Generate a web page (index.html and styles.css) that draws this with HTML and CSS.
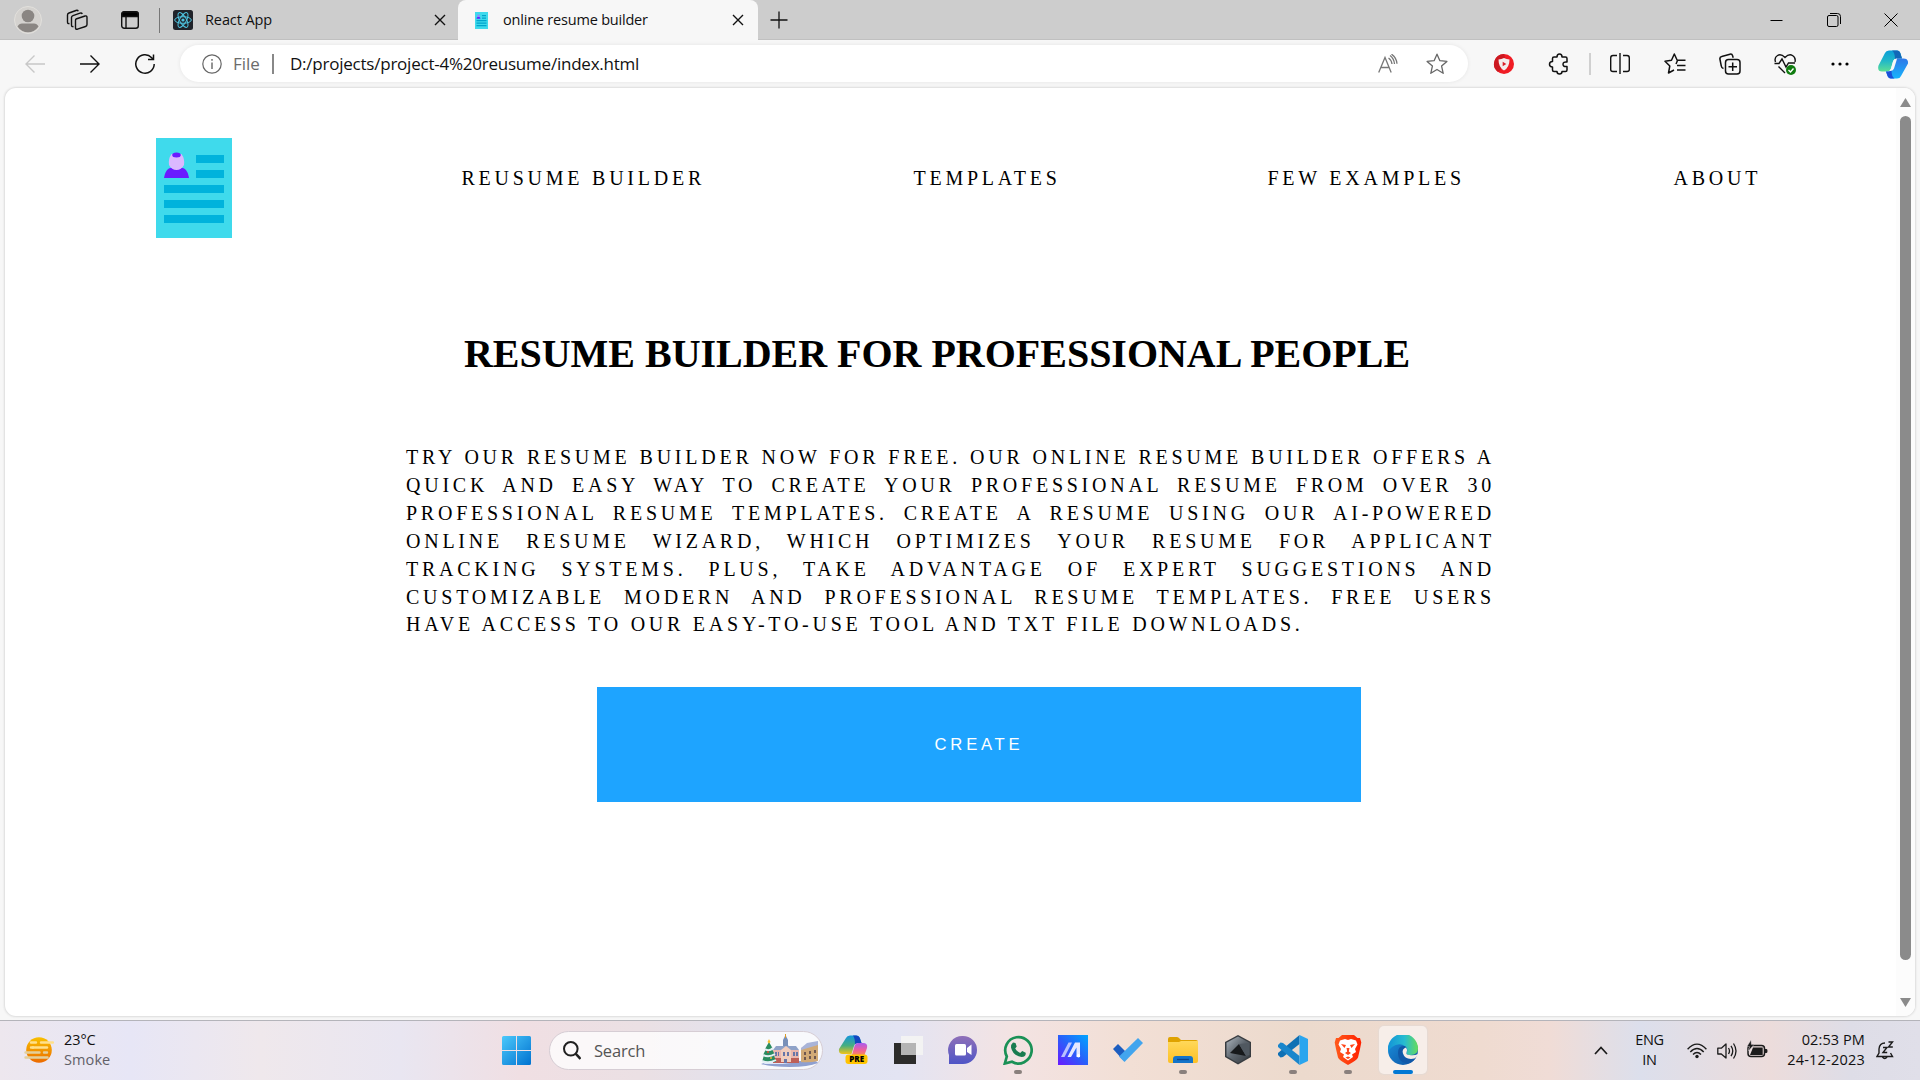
FILE: index.html
```html
<!DOCTYPE html>
<html lang="en">
<head>
<meta charset="utf-8">
<title>online resume builder</title>
<link rel="stylesheet" href="styles.css">
</head>
<body>
<svg width="0" height="0" class="defs" aria-hidden="true">
  <defs>
    <linearGradient id="sun" x1="0" y1="0" x2="0" y2="1"><stop offset="0" stop-color="#f8c000"/><stop offset="1" stop-color="#ec6a00"/></linearGradient>
    <linearGradient id="win" x1="0" y1="0" x2="1" y2="1"><stop offset="0" stop-color="#4cc9fb"/><stop offset="1" stop-color="#0072d0"/></linearGradient>
    <linearGradient id="chat" x1="0" y1="0" x2="0" y2="1"><stop offset="0" stop-color="#8f70b8"/><stop offset="1" stop-color="#4f55c6"/></linearGradient>
    <linearGradient id="ma" x1="0" y1="1" x2="1" y2="0"><stop offset="0" stop-color="#6a19ff"/><stop offset=".5" stop-color="#2860fa"/><stop offset="1" stop-color="#00a5ff"/></linearGradient>
    <linearGradient id="fold" x1="0" y1="0" x2="0" y2="1"><stop offset="0" stop-color="#ffd85a"/><stop offset="1" stop-color="#fdc025"/></linearGradient>
    <linearGradient id="lion" x1="0" y1="0" x2="1" y2="0"><stop offset="0" stop-color="#ff5a1c"/><stop offset="1" stop-color="#ff2000"/></linearGradient>
    <linearGradient id="edgeTop" x1="0" y1="0" x2="1" y2="0"><stop offset="0" stop-color="#1394d8"/><stop offset=".55" stop-color="#27bcd0"/><stop offset="1" stop-color="#66dc5a"/></linearGradient>
    <linearGradient id="edgeLow" x1="0" y1="0" x2="1" y2="1"><stop offset="0" stop-color="#1b94e0"/><stop offset="1" stop-color="#0c4fa0"/></linearGradient>
    <linearGradient id="copA" x1="0" y1="0" x2="0" y2="1"><stop offset="0" stop-color="#0a9ed8"/><stop offset=".5" stop-color="#22b8c8"/><stop offset="1" stop-color="#5ddf95"/></linearGradient>
    <linearGradient id="copB" x1="0" y1="0" x2="0" y2="1"><stop offset="0" stop-color="#2f78e8"/><stop offset="1" stop-color="#18b4fc"/></linearGradient>
    <linearGradient id="preA" x1="0" y1="0" x2="0" y2="1"><stop offset="0" stop-color="#1495dd"/><stop offset=".55" stop-color="#46ae80"/><stop offset="1" stop-color="#f2c419"/></linearGradient>
    <linearGradient id="preB" x1="0" y1="0" x2="0" y2="1"><stop offset="0" stop-color="#a95af0"/><stop offset=".6" stop-color="#f0609a"/><stop offset="1" stop-color="#f98a58"/></linearGradient>
    <linearGradient id="cube" x1="0" y1="0" x2="1" y2="1"><stop offset="0" stop-color="#b0b8c0"/><stop offset=".5" stop-color="#5c646c"/><stop offset="1" stop-color="#34393e"/></linearGradient>
    <symbol id="resume" viewBox="0 0 76 100" preserveAspectRatio="none">
      <path fill="#3fdaec" d="M0 0h76v100H0z"/>
      <path fill="#00b3dc" d="M40 17h28v8H40zM40 32h28v8H40zM8 47h60v8H8zM8 62h60v8H8zM8 77h60v8H8z"/>
      <path fill="#6a1bff" d="M8 40c1-6 3-9 6-10h13c3 1 5 4 6 10z"/>
      <path fill="#dbb8ff" d="M15.500 16q-3.500 5-2.500 11c1.500 3 4.500 5 7.500 5s6-2 7.500-5q1-6-2.500-11z"/>
      <ellipse cx="20.500" cy="17" rx="4.300" ry="2.500" fill="#6a1bff"/>
    </symbol>
    <symbol id="x" viewBox="0 0 12 12"><path d="M1 1l10 10M11 1L1 11" fill="none" stroke="#111" stroke-width="1.400"/></symbol>
  </defs>
</svg>

<header class="tabbar">
  <div class="tab-tools">
    <svg class="avatar" viewBox="0 0 28 28"><circle cx="14" cy="14" r="13.500" fill="#d4d2cf" stroke="#e2e0dc"/><circle cx="14" cy="10" r="6.300" fill="#8a8683"/><path d="M3.500 20.500Q5 17.500 8 17.500h12q3 0 4.500 3A12.500 12.500 0 0 1 3.500 20.500z" fill="#8a8683"/></svg>
    <svg class="workspaces" viewBox="0 0 22 22" fill="none" stroke="#111" stroke-width="1.400"><path d="M10 10l9-3q2-.5 2 1.500v7q0 1.500-1.500 2l-8 2.700q-2 .5-2-1.500v-7q0-1.300.5-1.700z"/><path d="M7.500 17.500Q5.500 18 5.500 16V8.500Q5.500 7.300 7 6.700l7-2.500q1.600-.6 2.300.8"/><path d="M3.500 14.500Q1.500 15 1.500 13V6Q1.500 4.500 3 4l7-2.500q1.600-.6 2.300.8"/></svg>
    <svg class="tabicon" viewBox="0 0 18 18" fill="none" stroke="#111" stroke-width="1.400"><rect x=".7" y=".7" width="16.600" height="16.600" rx="2.500"/><path d="M1 3Q1 1 3 1h12q2 0 2 2v2.500H1z" fill="#000"/><path d="M5 5v12"/></svg>
  </div>
  <div class="tab">
    <svg class="react" viewBox="0 0 20 20"><rect width="20" height="20" rx="2.500" fill="#20232a"/><g fill="none" stroke="#4fc4e0" stroke-width="1"><ellipse cx="10" cy="10" rx="8.300" ry="3.300"/><ellipse cx="10" cy="10" rx="8.300" ry="3.300" transform="rotate(60 10 10)"/><ellipse cx="10" cy="10" rx="8.300" ry="3.300" transform="rotate(120 10 10)"/></g><circle cx="10" cy="10" r="1.600" fill="#4fc4e0"/></svg>
    <span class="tab-name react-name">React App</span>
    <svg class="close"><use href="#x"/></svg>
  </div>
  <div class="tab active">
    <svg class="favicon" viewBox="0 0 13 17"><path fill="#3fdaec" d="M0 0h13v17H0z"/><path fill="#00a4cc" d="M7 3h4v1.200H7zM7 5.500h4v1.200H7zM1.500 8h10v1.200h-10zM1.500 10.500h10v1.200h-10zM1.500 13h10v1.200h-10z"/><path fill="#6a1bff" d="M1.500 6.800q0-2 2-2t2 2z"/><circle cx="3.500" cy="3.800" r="1.200" fill="#a080ff"/></svg>
    <span class="tab-name resume-name">online resume builder</span>
    <svg class="close"><use href="#x"/></svg>
  </div>
  <svg class="plus" viewBox="0 0 18 18"><path d="M9 .5v17M.5 9h17" stroke="#111" stroke-width="1.300"/></svg>
  <div class="window-buttons">
    <svg viewBox="0 0 14 14"><path d="M0.500 7.500h12" stroke="#000"/></svg>
    <svg viewBox="0 0 14 14" fill="none" stroke="#000"><rect x=".5" y="2.500" width="10.500" height="11" rx="1.500"/><path d="M3 .5h7.500q3 0 3 3V11"/></svg>
    <svg viewBox="0 0 14 14"><path d="M.5.5l13 13M13.500.5l-13 13" stroke="#000"/></svg>
  </div>
</header>

<nav class="toolbar">
  <div class="history">
    <svg viewBox="0 0 20 20" fill="none" stroke="#c8c8c8" stroke-width="1.400"><path d="M20 10H1M9.500 1.500L1 10l8.500 8.500"/></svg>
    <svg viewBox="0 0 20 20" fill="none" stroke="#111" stroke-width="1.400"><path d="M0 10h19M10.500 1.500L19 10l-8.500 8.500"/></svg>
    <svg viewBox="0 0 20 20" fill="none" stroke="#111" stroke-width="1.500"><path d="M19.200 10a9.200 9.200 0 1 1-2.500-6.300l1.800 1.800M18.500.5v5h-5.500"/></svg>
  </div>
  <div class="address">
    <svg class="info" viewBox="0 0 20 20"><circle cx="10" cy="10" r="9.200" fill="none" stroke="#666" stroke-width="1.200"/><path d="M10 8.500V15M10 5v1.700" stroke="#666" stroke-width="1.400"/></svg>
    <span class="scheme">File</span>
    <span class="url">D:/projects/project-4%20reusume/index.html</span>
    <svg class="aloud" viewBox="0 0 20 20" fill="none" stroke="#777" stroke-width="1.300"><path d="M.7 18.500L7 3.500l6.200 15M3 13.500h8M10.500 4q3 2 3.500 6M12 1.500q4 3 4.500 8.500M13.500.2q4.800 3 5.500 9.500"/></svg>
    <svg class="fav" viewBox="0 0 22 22" fill="none" stroke="#666" stroke-width="1.300" stroke-linejoin="round"><path d="M11 1.200l2.900 6.500 7 .7-5.300 4.700 1.600 7.200-6.200-3.800-6.200 3.800 1.600-7.200L1.100 8.400l7-.7z"/></svg>
  </div>
  <div class="extensions">
    <svg viewBox="0 0 22 22"><circle cx="11" cy="11" r="10" fill="#f01c24"/><path d="M11 1a10 10 0 0 0-6 18L14 11z" fill="#cc1820"/><path d="M11 5q2.500 1.300 5.500 1.500 0 8-5.500 11-5.500-3-5.500-11Q8.500 6.300 11 5z" fill="#f4eeee"/><path d="M9.700 8.700l3.600 2.300-3.600 2.300z" fill="#d8202a"/></svg>
    <svg viewBox="0 0 22 22" fill="none" stroke="#111" stroke-width="1.500" stroke-linejoin="round"><path d="M6 4h3Q9 1 11.500 1T14 4h3.500q1.500 0 1.500 1.500V9q-4-.5-4 2.300t4 2.200v3.500q0 1.500-1.500 1.500H14q0 2.500-2.500 2.500T9 18.500H6q-1.500 0-1.500-1.500v-3Q1.500 14 1.500 11.300t3-2.800v-3Q4.500 4 6 4z"/></svg>
    <i class="rule"></i>
    <svg viewBox="0 0 22 22" fill="none" stroke="#111" stroke-width="1.400"><path d="M8 2.500H4Q1.700 2.500 1.700 5v11.500q0 2 2.300 2h4M14 2.500h4q2.300 0 2.300 2.500v11.500q0 2-2.300 2h-4M11 0v21"/></svg>
    <svg viewBox="0 0 22 22" fill="none" stroke="#111" stroke-width="1.500" stroke-linejoin="round"><path d="M10 17l-5.500 3 1.300-7L1 8.200l6.500-1L10.300 1l2.900 6.200h8.300M13 12.500h8.500M13 17h8.500M13.500 7.500L12 11"/></svg>
    <svg viewBox="0 0 22 22" fill="none" stroke="#111" stroke-width="1.500"><path d="M4.500 15.500Q2.500 15 2.300 13L.9 6Q.6 4 2.700 3.500L11 1.200q2-.5 2.600 1.500l.6 2"/><rect x="6.500" y="6.500" width="14.500" height="14.500" rx="3"/><path d="M13.700 9.500v8.500M9.500 13.700h8.500"/></svg>
    <svg viewBox="0 0 22 22" fill="none" stroke="#111" stroke-width="1.400"><path d="M1.500 9Q0 4.500 3.500 2.500t7.500 2q4-4 7.500-2T21 9M.5 10.500h4.500L8 6l4 8 2.500-4H21M4.500 13.500L11 20"/><circle cx="17" cy="17" r="5" fill="#107c10" stroke="none"/><path d="M14.500 17l2 2 3-3.500" stroke="#fff"/></svg>
    <svg viewBox="0 0 22 22"><circle cx="4" cy="11" r="1.600"/><circle cx="11" cy="11" r="1.600"/><circle cx="18" cy="11" r="1.600"/></svg>
  </div>
  <svg class="copilot" viewBox="0 0 30 28"><path d="M7 2.500Q8 0 11 0h8q2.500 0 3.500 3l1.500 5h-5q-3 0-4 3l-2 7q-1 3-4 3H4q-5 0-3.500-6z" fill="url(#copA)"/><path d="M14 0h5q2.500 0 3.500 3L24 8h-5l-2 1Q17 2 14 0z" fill="#1268b8"/><path d="M23 25.500q-1 2.500-4 2.500h-6q-3 0-4-4l-1-3h2.500q2.500 0 3.500-3l2-7q1-3 4-3h5.500q5 0 4.500 5z" fill="url(#copB)"/><path d="M8 21h3l2.500-1q0 6 3 8H13q-3 0-4-4z" fill="#1c50d8"/><path d="M19 8q-3 0-4 3l-2 7-1.500 2.500Q15 20.500 16 18l2.500-8z" fill="#f7f7f7"/></svg>
</nav>

<div class="viewport">
  <div class="page">
    <div class="menu">
      <svg class="logo"><use href="#resume"/></svg>
      <a class="m1">REUSUME BUILDER</a>
      <a class="m2">TEMPLATES</a>
      <a class="m3">FEW EXAMPLES</a>
      <a class="m4">ABOUT</a>
    </div>
    <h1>RESUME BUILDER FOR PROFESSIONAL PEOPLE</h1>
    <p>TRY OUR RESUME BUILDER NOW FOR FREE. OUR ONLINE RESUME BUILDER OFFERS A QUICK AND EASY WAY TO CREATE YOUR PROFESSIONAL RESUME FROM OVER 30 PROFESSIONAL RESUME TEMPLATES. CREATE A RESUME USING OUR AI-POWERED ONLINE RESUME WIZARD, WHICH OPTIMIZES YOUR RESUME FOR APPLICANT TRACKING SYSTEMS. PLUS, TAKE ADVANTAGE OF EXPERT SUGGESTIONS AND CUSTOMIZABLE MODERN AND PROFESSIONAL RESUME TEMPLATES. FREE USERS HAVE ACCESS TO OUR EASY-TO-USE TOOL AND TXT FILE DOWNLOADS.</p>
    <button class="create">CREATE</button>
  </div>
  <div class="scrollbar">
    <svg viewBox="0 0 11 9"><path d="M5.500 0L11 9H0z" fill="#8b8b8b"/></svg>
    <i class="thumb"></i>
    <svg viewBox="0 0 11 9"><path d="M5.500 9L11 0H0z" fill="#8b8b8b"/></svg>
  </div>
</div>

<footer class="taskbar">
  <div class="weather">
    <svg viewBox="0 0 30 28"><circle cx="15" cy="14" r="12.800" fill="url(#sun)"/><g stroke="#e3cf9c" stroke-width="2.400" stroke-linecap="round"><path d="M7 6.500h5M17 6.500h5M7 11.500h2M17 6.500h12" stroke="#ffe08a"/><path d="M9 11.500h14" stroke="#ffe08a"/><path d="M1.500 16.500h14M20 16.500h3M1.500 21.500h22"/></g></svg>
    <div><span class="degrees">23°C</span><span class="sky">Smoke</span></div>
  </div>
  <svg class="start" viewBox="0 0 29 29" fill="url(#win)"><path d="M1.500 0H14v14H0V1.500Q0 0 1.500 0zM15 0h12.500Q29 0 29 1.500V14H15zM0 15h14v14H1.500Q0 29 0 27.500zM15 15h14v12.500q0 1.500-1.500 1.500H15z"/></svg>
  <div class="search">
    <svg class="lens" viewBox="0 0 18 19" fill="none" stroke="#202020" stroke-width="2"><circle cx="7.800" cy="7.800" r="6.800"/><path d="M12.500 12.500l5 5.500" stroke-width="2.600"/></svg>
    <span>Search</span>
    <svg class="village" viewBox="0 0 58 33">
      <path d="M0 30q10-5 22-3h22q10-2 13 2-10 4-28 4T0 30z" fill="#8fa0d0"/>
      <path d="M2 29q8-3 16-1 6 2 18 2H4z" fill="#dfe8fa"/>
      <path d="M40 14l17-5v18q-9 2-17 1z" fill="#d2aa76"/><path d="M40 14l6-5 11-2v4l-17 5z" fill="#a9b4d8"/>
      <path d="M43 18h2v3h-2zM48 17h2v3h-2zM53 16h2v3h-2zM43 23h2v3h-2zM48 22h2v3h-2zM53 22h2v3h-2z" fill="#6f5850"/>
      <path d="M12 16h26v13H12z" fill="#eab7ae"/><path d="M12 24h26v5H12z" fill="#bd5f58"/>
      <path d="M12 16l3-4h7l3-2 3 2h7l3 4z" fill="#8ea2c8"/><path d="M20 16l5-4 5 4v12h-10z" fill="#f0cdbc"/>
      <path d="M22 12V6l2.500-5L27 6v6z" fill="#7890b8"/><path d="M24.500 0v4" stroke="#d99a28"/>
      <path d="M14 18h2v4h-2zM17 18h1v4h-1zM22 18h2v4h-2zM26 18h2v4h-2zM32 18h2v4h-2zM35 18h2v4h-2zM23 25h3v4h-3z" fill="#6776a8"/>
      <path d="M8 8l4 7h-1l3 6h-1l2 7H1l2-7H2l3-6H4z" fill="#2b8c60"/><path d="M4 15q4 3 8-1M2 21q6 3 12-1M1 27q7 3 14-1" stroke="#e4f0f4" stroke-width="2" fill="none"/>
      <path d="M8 5l1.500 3-1.500 1.500L6.500 8z" fill="#f8c030"/><circle cx="7" cy="18" r="1" fill="#e04c38"/><circle cx="10" cy="24" r="1" fill="#f2b530"/>
    </svg>
  </div>
  <div class="apps">
    <div class="app"><svg viewBox="0 0 30 30"><path d="M8 3q1-2.500 4-2.500h6q3 0 4 3L23.500 8H20q-3 0-4 3l-2.500 8H5Q0 19 1 14z" fill="url(#preA)"/><path d="M15 .5h3q3 0 4 3L23.500 8H20l-3 1Q17 3 15 .5z" fill="#1246c0"/><path d="M14 20l2.500-9q1-3 4-3H25q5 0 4 5l-2.500 7z" fill="url(#preB)"/><rect x="7.500" y="19.500" width="22" height="9.500" rx="3" fill="#ffc400"/><text x="18.600" y="27.200" class="pre">PRE</text></svg></div>
    <div class="app"><svg viewBox="0 0 30 30"><path d="M1 8h22v21H1z" fill="#2c2c2b"/><path d="M8 1h22v19H8z" fill="#f3f3f3"/><path d="M8 8h15v12H8z" fill="#b4b4b4"/></svg></div>
    <div class="app"><svg viewBox="0 0 30 30"><path d="M15 1a14 14 0 1 1 0 28H1V20A14 14 0 0 1 15 1z" fill="url(#chat)"/><rect x="7" y="9" width="11" height="11.500" rx="1.500" fill="#fff"/><path d="M19 13l4.500-3.500v10.500L19 17z" fill="#fff"/></svg></div>
    <div class="app open"><svg viewBox="0 0 30 30"><path d="M1.800 28.500l2-7A13.200 13.200 0 1 1 9 26.800z" fill="none" stroke="#1a9156" stroke-width="2.700"/><path d="M10 7.500l2.500.5 1.200 3.500-1.500 2q1.500 3 5 4.500l2-2 3.500 1.800q.5 4-4 4.200Q10 21 8 12.500 8 9 10 7.500z" fill="#1a7c50"/></svg></div>
    <div class="app"><svg viewBox="0 0 30 30"><path d="M0 0h30v30H0z" fill="url(#ma)"/><path d="M3 22L10.500 7.500H14L6.500 22z" fill="#b9c0ff"/><path d="M9.500 22L17 7.500h5V22h-3.500v-9.500L13 22z" fill="#e5e8ff"/><circle cx="20.500" cy="20.700" r="1.700" fill="#fff"/></svg></div>
    <div class="app"><svg viewBox="0 0 30 30"><path d="M0 14l5-5 10.500 10.500-5 6z" fill="#1c5dc0"/><path d="M25 3l5 5-18.500 19-5.500-5.500z" fill="#42a5ee"/></svg></div>
    <div class="app open"><svg viewBox="0 0 30 30"><path d="M0 7V4Q0 2 2 2h7q1.500 0 2.500 1.500L13 5h15q2 0 2 2z" fill="#dfa200"/><path d="M0 7h11l2-1h17v20q0 2-2 2H2q-2 0-2-2z" fill="url(#fold)"/><path d="M5 28v-4q0-3 3-3h14q3 0 3 3v4z" fill="#1474c9"/><path d="M9 24.500h12" stroke="#0b468c" stroke-width="1.300"/></svg></div>
    <div class="app"><svg viewBox="0 0 30 30"><path d="M15 0l13 7v15l-13 7.500L2 22V7z" fill="#383c40"/><path d="M15 1.500l11.500 6.300v13.500L15 28 3.500 21.300V7.800z" fill="url(#cube)"/><path d="M16 9l7 12-16-3z" fill="#17191b"/><path d="M16 9l7 12 3.500-1V8z" fill="#505860"/></svg></div>
    <div class="app open"><svg viewBox="0 0 30 30"><path d="M21.500 0v9L5 22l-2.500.5L0 20v-2z" fill="#0f70b4"/><path d="M21.500 30v-9L5 8l-2.500-.5L0 10v2z" fill="#1a86cc"/><path d="M21.500 0L30 4v22l-8.500 4z" fill="#2aa5ee"/></svg></div>
    <div class="app open"><svg viewBox="0 0 30 30"><path d="M9 0h12l3.500 3H27l1.300 4.500L27 14l-2 8.500q-1 2.500-10 7.500Q6 25 5 22.500L3 14 1.700 7.500 3 3h2.500z" fill="url(#lion)"/><path d="M15 5l3-1 5 1.500 1.500 4-2.500 4.500 1 3-4 2.500 1 2.500-5 3.500-5-3.500 1-2.500-4-2.500 1-3L5.500 9.500l1.500-4L12 4z" fill="#fff"/><path d="M8 9l5 1-1.500 3zM22 9l-5 1 1.500 3zM13.500 13h3l-.7 3.500 2.200 1.500-3 2-3-2 2.200-1.500zM9 15l2 3M21 15l-2 3M12.500 22.500l2.500-1 2.500 1-2.500 1.500z" fill="#ff4518"/></svg></div>
    <div class="app current"><svg viewBox="0 0 30 30"><circle cx="15" cy="15" r="15" fill="url(#edgeLow)"/><path d="M0 14A15 15 0 0 1 30 13.500q0 6.500-7 6.500-5.500 0-4.500-2.500 2-3-1-6Q11 7 4 12q-3 2-4 6z" fill="url(#edgeTop)"/><path d="M17 11q-7-1-7 7 0 9 8.500 10.500Q25 28 28 22.500q-5 3-9 1-6-3.500-4-8 .8-2.500 3.500-2.500z" fill="#1058a8"/><path d="M18 12.500q-4.500 1.500-3 6 1.500 5 8 5.500 4 0 5.500-2l1.500-3q-4 2-8.500 1-4-.5-3-2.500 1.500-2.500-.5-5z" fill="#f6ede8"/></svg></div>
  </div>
  <div class="tray">
    <svg class="chevron" viewBox="0 0 14 9"><path d="M1 8l6-6.500L13 8" fill="none" stroke="#1b1b1b" stroke-width="1.700"/></svg>
    <div class="lang"><span>ENG</span><span>IN</span></div>
    <svg class="wifi" viewBox="0 0 20 16" fill="none" stroke="#1b1b1b" stroke-width="1.400"><path d="M.6 6.200Q10-4 19.400 6.200M3.300 9q6.700-7 13.400 0M6 11.500q4-4 8 0"/><circle cx="10" cy="13.500" r="1.700" fill="#1b1b1b" stroke="none"/></svg>
    <svg class="sound" viewBox="0 0 20 18" fill="none" stroke="#1b1b1b" stroke-width="1.300" stroke-linejoin="round"><path d="M.8 6.200h3.500L9 2v14l-4.700-4H.8zM11.500 6q2 3 0 6M14 3.800q3.500 5 0 10.400M16.500 1.500q5 7.500 0 15"/></svg>
    <svg class="battery" viewBox="0 0 21 18"><rect x="1" y="5.500" width="16.500" height="11" rx="3" fill="none" stroke="#1b1b1b" stroke-width="1.500"/><path d="M3 15l3-7.500h9.700V15zM18 9h1.500q1 0 1 2t-1 2H18z" fill="#1b1b1b"/><path d="M4 0L0 6.500h2.500L1.500 11 7 4.500H4.300z" fill="#1b1b1b" stroke="#e5dce0" stroke-width=".4"/></svg>
    <div class="clock"><span class="time">02:53 PM</span><span class="date">24-12-2023</span></div>
    <svg class="bell" viewBox="0 0 18 19" fill="none" stroke="#1b1b1b" stroke-width="1.400"><path d="M9 2Q3.500 2 3 8v4L1 15.500h15.500L14.500 12M6.500 16q2.200 3 4.500 0M7 6.500h4l-4 5h4.200M12.500 1h4l-4 5h4.300"/></svg>
  </div>
</footer>
</body>
</html>
```
FILE: styles.css
```css
* { box-sizing: border-box; }

body {
  margin: 0;
  width: 1920px;
  height: 1080px;
  overflow: hidden;
  display: flex;
  flex-direction: column;
  background: #f7f7f7;
  font-family: "Open Sans", "Noto Sans", sans-serif;
  color: #111;
}

svg { display: block; flex: none; }
.defs { position: absolute; }

/* tab strip */
.tabbar {
  flex: none;
  height: 40px;
  display: flex;
  align-items: center;
  background: #cdcdcd;
  box-shadow: inset 0 -1px 0 #c0c0c0;
}
.tab-tools {
  width: 160px;
  height: 25px;
  padding-left: 14px;
  display: flex;
  align-items: center;
  border-right: 1px solid #777;
}
.avatar { width: 28px; height: 28px; }
.workspaces { width: 22px; height: 22px; margin-left: 24px; }
.tabicon { width: 18px; height: 18px; margin-left: 33px; }
.tab {
  width: 298px;
  height: 40px;
  padding: 0 12px 0 13px;
  display: flex;
  align-items: center;
}
.react { width: 20px; height: 20px; }
.tab-name { font-size: 14.500px; line-height: 20px; white-space: nowrap; }
.react-name { margin-left: 12px; letter-spacing: -.1px; }
.resume-name { margin-left: 15px; letter-spacing: -.2px; }
.close { width: 12px; height: 12px; margin-left: auto; }
.tab.active {
  width: 300px;
  padding: 0 14px 0 17px;
  background: #f7f7f7;
  border-radius: 8px 8px 0 0;
}
.favicon { width: 13px; height: 17px; }
.plus { width: 18px; height: 18px; margin: 0 0 1px 12px; }
.window-buttons { margin-left: auto; padding-right: 22px; display: flex; gap: 43px; }
.window-buttons svg { width: 14px; height: 14px; }

/* toolbar */
.toolbar {
  flex: none;
  height: 48px;
  padding: 0 0 1px 25px;
  display: flex;
  align-items: center;
}
.history { width: 155px; display: flex; gap: 35px; }
.history svg { width: 20px; height: 20px; }
.address {
  width: 1288px;
  height: 37px;
  padding: 0 20px 0 22px;
  display: flex;
  align-items: center;
  background: #fff;
  border-radius: 19px;
  box-shadow: 0 0 4px rgba(0, 0, 0, .08);
  font-size: 17px;
  white-space: nowrap;
}
.info { width: 20px; height: 20px; }
.scheme {
  width: 41px;
  height: 20px;
  margin: 0 16px 0 11px;
  border-right: 2px solid #888;
  line-height: 19px;
  color: #6b6b6b;
}
.url { line-height: 20px; letter-spacing: -.23px; }
.aloud { width: 20px; height: 20px; margin-left: auto; }
.fav { width: 22px; height: 22px; margin-left: 28px; }
.extensions { margin-left: 25px; display: flex; align-items: center; }
.extensions svg { width: 22px; height: 22px; margin-right: 33px; }
.extensions svg:nth-child(2) { margin-right: 19px; }
.rule { width: 2px; height: 22px; margin-right: 18px; background: #d0d0d0; }
.copilot { width: 30px; height: 29px; margin: 2px 0 0 -6px; }

/* web page */
.viewport {
  flex: none;
  width: 1910px;
  height: 928px;
  margin: 0 0 4px 5px;
  display: flex;
  overflow: hidden;
  background: #fff;
  border-radius: 11px;
  box-shadow: 0 0 2px 1px #dcdcdc;
}
.page { width: 1891px; font-family: "Liberation Serif", serif; color: #000; }
.menu {
  height: 150px;
  padding: 50px 0 0 151px;
  display: flex;
  align-items: flex-start;
  font-size: 20px;
  line-height: 23px;
  letter-spacing: 3.750px;
  white-space: nowrap;
}
.menu a { margin-top: 29px; flex: none; }
.logo { width: 76px; height: 100px; }
.menu .m1 { width: 452px; margin-left: 229.500px; }
.m2 { width: 354px; }
.m3 { width: 406px; }
h1 {
  margin: 91px 0 0 459px;
  font-size: 40px;
  line-height: 50px;
  letter-spacing: -.02px;
  white-space: nowrap;
}
p {
  width: 1089px;
  margin: 65px 0 0 401px;
  font-size: 20px;
  line-height: 27.900px;
  letter-spacing: 3.750px;
  text-align: justify;
}
.create {
  display: block;
  width: 764px;
  height: 115px;
  margin: 48px 0 0 592px;
  padding: 0;
  border: 0;
  background: #1ea4ff;
  color: #fff;
  font: 16.670px "Liberation Sans", sans-serif;
  letter-spacing: 3.750px;
}
.scrollbar {
  width: 19px;
  padding: 10px 4px 9px;
  display: flex;
  flex-direction: column;
  background: #fcfcfc;
}
.scrollbar svg { width: 11px; height: 9px; }
.thumb { height: 844px; margin: 9px 0 auto; border-radius: 6px; background: #8b8b8b; }

/* taskbar */
.taskbar {
  flex: 1;
  display: flex;
  align-items: center;
  border-top: 1px solid #b4b4ba;
  background: linear-gradient(90deg, #ede7ee 0, #e7e6f6 130px, #efe8ec 260px, #e9e6f1 400px, #f0dfe3 520px, #ebe0e4 640px, #dfe2f0 780px, #e3e4f3 900px, #f3e3e3 1010px, #f2dfd5 1130px, #ecdacd 1300px, #efdbd0 1480px, #f0dcd6 1550px, #dcdfec 1640px, #ecdcdb 1770px, #dedde7 1850px, #e0dfe9 1920px);
  white-space: nowrap;
}
.weather { width: 502px; padding: 0 0 2px 24px; display: flex; align-items: center; }
.weather svg { width: 30px; height: 28px; }
.weather div { margin-left: 10px; }
.weather span { display: block; font-size: 14.500px; line-height: 20px; letter-spacing: -.1px; }
.weather .sky { color: #626068; letter-spacing: .1px; }
.start { width: 29px; height: 29px; }
.search {
  width: 274px;
  height: 39px;
  margin-left: 18px;
  padding: 0 3px 0 13px;
  display: flex;
  align-items: center;
  background: rgba(255, 255, 255, .78);
  border: 1px solid #d6cdd4;
  border-radius: 20px;
  font-size: 16.500px;
  color: #555;
}
.lens { width: 18px; height: 19px; }
.search span { margin-left: 13px; letter-spacing: -.2px; }
.village { width: 58px; height: 33px; margin-left: auto; }
.apps { margin-left: 2px; height: 59px; display: flex; }
.app {
  width: 48px;
  height: 48px;
  margin: 5px 3.500px;
  padding: 9px;
  position: relative;
  border-radius: 5px;
}
.app svg { width: 30px; height: 30px; }
.app.open::after, .app.current::after {
  content: "";
  position: absolute;
  left: 20px;
  bottom: 0;
  width: 8px;
  height: 4px;
  border-radius: 2px;
  background: #8a807d;
}
.app.current { background: #f7eee9; box-shadow: 0 0 1px 1px #e6dad3; }
.app.current::after { left: 14px; width: 20px; background: #0078d4; }
.pre { font: 800 8px "Open Sans", sans-serif; text-anchor: middle; }
.tray { margin-left: auto; padding-right: 26px; display: flex; align-items: center; font-size: 14.500px; line-height: 20px; letter-spacing: -.35px; }
.tray span { display: block; }
.chevron { width: 14px; height: 9px; }
.lang { width: 83px; padding-bottom: 2px; text-align: center; }
.wifi { width: 20px; height: 16px; margin-right: 10px; margin-left: -4px; }
.sound { width: 20px; height: 18px; }
.battery { width: 21px; height: 18px; margin: 0 0 4px 10px; }
.clock { width: 97px; padding-bottom: 2px; text-align: right; }
.time { letter-spacing: .1px; }
.date { letter-spacing: .22px; }
.bell { width: 18px; height: 19px; margin-left: 11px; }
```
